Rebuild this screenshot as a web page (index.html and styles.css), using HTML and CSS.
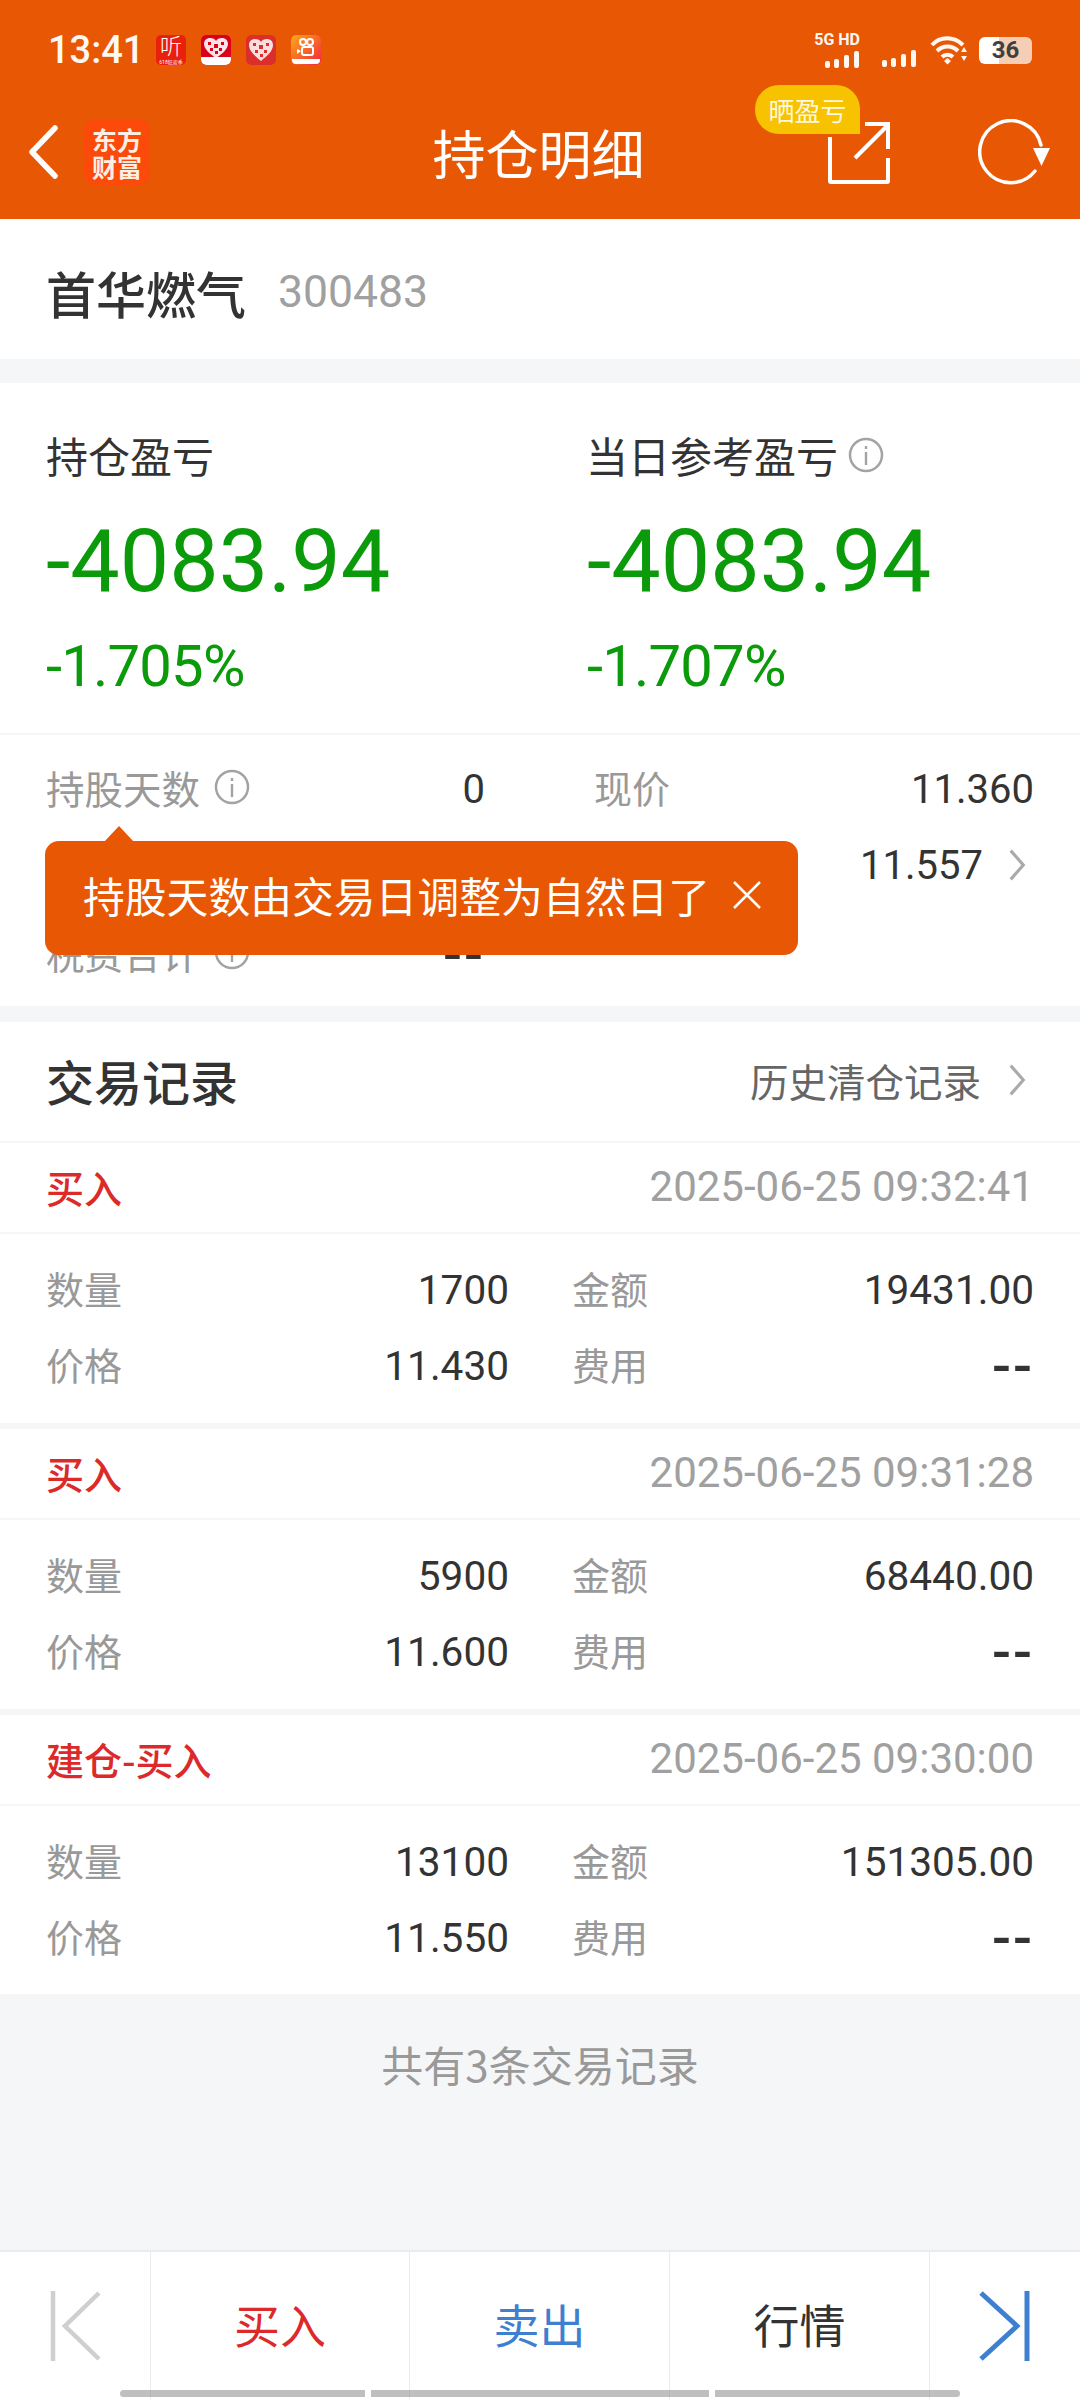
FILE: index.html
```html
<!DOCTYPE html>
<html lang="zh">
<head>
<meta charset="utf-8">
<title>持仓明细</title>
<link rel="stylesheet" href="styles.css">
</head>
<body>
<div class="page">
  <header class="header">
    <div class="status">
      <div class="status-left">
        <span class="time">13:41</span>
        <span class="app app-ting"><span class="ting">听</span><span class="ting-sub">618狂欢季</span></span>
        <span class="app app-white">
          <svg viewBox="0 0 30 30" class="fill"><rect width="30" height="30" rx="5" fill="#d9001b"/><path d="M0 22h30v3a5 5 0 0 1-5 5H5a5 5 0 0 1-5-5z" fill="#fff"/><path d="M15 23C9 19 3 14 3 9c0-4 3-6 6-6 3 0 5 1 6 3 1-2 3-3 6-3 3 0 6 2 6 6 0 5-6 10-12 14z" fill="#fbe4e6"/><path d="M7 7h3v3H7zM13 9h4v4h-4zM20 7h3v3h-3zM9 13h3v3H9zM18 13h3v3h-3zM14 16h3v3h-3z" fill="#d9001b"/></svg>
        </span>
        <span class="app">
          <svg viewBox="0 0 30 30" class="fill"><rect width="30" height="30" rx="5" fill="#dc2f2c"/><path d="M15 26C9 21 3 16 3 10c0-4 3-6 6-6 3 0 5 1 6 3 1-2 3-3 6-3 3 0 6 2 6 6 0 6-6 11-12 16z" fill="#fbdfe0"/><path d="M7 8h3v3H7zM13 10h4v4h-4zM20 8h3v3h-3zM9 15h3v3H9zM18 15h3v3h-3zM14 19h3v3h-3z" fill="#dc2f2c"/></svg>
        </span>
        <span class="app">
          <svg viewBox="0 0 30 30" class="fill"><defs><linearGradient id="ks" x1="0" y1="0" x2="1" y2="1"><stop offset="0" stop-color="#fba919"/><stop offset="1" stop-color="#f5243d"/></linearGradient></defs><rect width="30" height="30" rx="5" fill="url(#ks)"/><circle cx="12" cy="7" r="3" fill="none" stroke="#fff" stroke-width="2"/><circle cx="19" cy="7" r="3" fill="none" stroke="#fff" stroke-width="2"/><rect x="11" y="12" width="11" height="8" rx="2" fill="none" stroke="#fff" stroke-width="2"/><path d="M6 14l4 2-4 3z" fill="#fff"/><path d="M1 24h28v1a4 4 0 0 1-4 4H5a4 4 0 0 1-4-4z" fill="#fff"/></svg>
        </span>
      </div>
      <div class="status-right">
        <div class="signal-group">
          <span class="net">5G HD</span>
          <svg class="bars" viewBox="0 0 35 17"><rect x="0" y="10" width="5" height="7" rx="2"/><rect x="9" y="8" width="5" height="9" rx="2"/><rect x="19" y="4" width="5" height="13" rx="2"/><rect x="29" y="0" width="5" height="17" rx="2"/></svg>
        </div>
        <svg class="bars bars-2" viewBox="0 0 35 17"><rect x="0" y="10" width="5" height="7" rx="2"/><rect x="9" y="8" width="5" height="9" rx="2"/><rect x="19" y="4" width="5" height="13" rx="2"/><rect x="29" y="0" width="5" height="17" rx="2"/></svg>
        <svg class="wifi" viewBox="0 0 38 30"><g fill="none" stroke="#fff8f2" stroke-width="4"><path d="M2 10C10 1 24 1 33 10"/><path d="M7 16c6-6 15-6 21 0"/><path d="M12 22c3-3 8-3 11 0"/></g><path d="M14 26l3.500-3 3.500 3-3.500 3.500z" fill="#fff8f2"/><path d="M34 12l3 5h-6zM31 21h6l-3 5z" fill="#fff8f2"/></svg>
        <span class="battery"><span class="battery-num">36</span></span>
      </div>
    </div>
    <nav class="nav">
      <div class="nav-left">
        <svg class="back" viewBox="0 0 32 54"><path d="M28 3L5 27l23 24" fill="none" stroke="#fff" stroke-width="5.500" stroke-linecap="round" stroke-linejoin="round"/></svg>
        <span class="logo">东方<br>财富</span>
      </div>
      <h1 class="title">持仓明细</h1>
      <div class="nav-right">
        <span class="share-wrap">
          <svg class="share" viewBox="0 0 64 64"><g fill="none" stroke="#fff" stroke-width="4"><path d="M3 16v44a1 1 0 0 0 1 1h56a1 1 0 0 0 1-1V37"/><path d="M28 37L61 4"/><path d="M38 3h23v25"/></g></svg>
          <span class="badge">晒盈亏</span>
        </span>
        <svg class="refresh" viewBox="0 0 72 66"><path d="M57 52A31 31 0 1 1 63 26" fill="none" stroke="#fff" stroke-width="3.500" stroke-linecap="round"/><path d="M55 29h17l-8.500 18z" fill="#fff"/></svg>
      </div>
    </nav>
  </header>

  <section class="name-row">
    <span class="stock-name">首华燃气</span>
    <span class="stock-code">300483</span>
  </section>

  <section class="summary">
    <div class="pl-row">
      <div class="pl-col">
        <div class="pl-label">持仓盈亏</div>
        <div class="pl-value">-4083.94</div>
        <div class="pl-pct">-1.705%</div>
      </div>
      <div class="pl-col">
        <div class="pl-label">当日参考盈亏<svg class="info info-lg" viewBox="0 0 36 36"><circle cx="18" cy="18" r="16" fill="none" stroke="#a3a3a3" stroke-width="2.500"/><rect x="16.800" y="15" width="2.400" height="13" fill="#a3a3a3"/><rect x="16.800" y="9" width="2.400" height="3" fill="#a3a3a3"/></svg></div>
        <div class="pl-value">-4083.94</div>
        <div class="pl-pct">-1.707%</div>
      </div>
    </div>
    <div class="detail">
      <div class="detail-row">
        <div class="detail-cell detail-left"><span class="muted muted-wide">持股天数<svg class="info" viewBox="0 0 36 36"><circle cx="18" cy="18" r="16" fill="none" stroke="#a3a3a3" stroke-width="2.500"/><rect x="16.800" y="15" width="2.400" height="13" fill="#a3a3a3"/><rect x="16.800" y="9" width="2.400" height="3" fill="#a3a3a3"/></svg></span><span class="val">0</span></div>
        <div class="detail-cell detail-right"><span class="muted">现价</span><span class="val">11.360</span></div>
      </div>
      <div class="detail-row">
        <div class="detail-cell detail-left"></div>
        <div class="detail-cell detail-right detail-end"><span class="val">11.557</span><svg class="chev" viewBox="0 0 20 40"><path d="M3 4l14 16L3 36" fill="none" stroke="#aaa" stroke-width="3.500"/></svg></div>
      </div>
      <div class="detail-row detail-last">
        <div class="detail-cell detail-left"><span class="muted muted-wide">税费合计<svg class="info" viewBox="0 0 36 36"><circle cx="18" cy="18" r="16" fill="none" stroke="#a3a3a3" stroke-width="2.500"/><rect x="16.800" y="15" width="2.400" height="13" fill="#a3a3a3"/><rect x="16.800" y="9" width="2.400" height="3" fill="#a3a3a3"/></svg></span><span class="val dash">--</span></div>
      </div>
    </div>
    <div class="tip">
      <span class="tip-text">持股天数由交易日调整为自然日了</span>
      <svg class="tip-close" viewBox="0 0 30 30"><path d="M2 2l26 26M28 2L2 28" stroke="#fff" stroke-width="2.500" fill="none"/></svg>
    </div>
  </section>

  <section class="records">
    <div class="records-head">
      <span class="records-title">交易记录</span>
      <span class="records-link">历史清仓记录<svg class="chev" viewBox="0 0 20 40"><path d="M3 4l14 16L3 36" fill="none" stroke="#aaa" stroke-width="3.500"/></svg></span>
    </div>

    <article class="trade">
      <div class="trade-head"><span class="trade-type">买入</span><span class="trade-time">2025-06-25 09:32:41</span></div>
      <div class="trade-grid">
        <span class="muted">数量</span><span class="val">1700</span><span class="muted col3">金额</span><span class="val">19431.00</span>
        <span class="muted">价格</span><span class="val">11.430</span><span class="muted col3">费用</span><span class="val dash">--</span>
      </div>
    </article>
    <article class="trade">
      <div class="trade-head"><span class="trade-type">买入</span><span class="trade-time">2025-06-25 09:31:28</span></div>
      <div class="trade-grid">
        <span class="muted">数量</span><span class="val">5900</span><span class="muted col3">金额</span><span class="val">68440.00</span>
        <span class="muted">价格</span><span class="val">11.600</span><span class="muted col3">费用</span><span class="val dash">--</span>
      </div>
    </article>
    <article class="trade trade-last">
      <div class="trade-head"><span class="trade-type">建仓-买入</span><span class="trade-time">2025-06-25 09:30:00</span></div>
      <div class="trade-grid">
        <span class="muted">数量</span><span class="val">13100</span><span class="muted col3">金额</span><span class="val">151305.00</span>
        <span class="muted">价格</span><span class="val">11.550</span><span class="muted col3">费用</span><span class="val dash">--</span>
      </div>
    </article>
  </section>

  <div class="count"><span>共有3条交易记录</span></div>

  <footer class="bar">
    <div class="bar-arrow bar-first"><svg viewBox="0 0 52 72"><path d="M3 1v70" stroke="#cfcfcf" stroke-width="4.500" fill="none"/><path d="M49 3L15 36l34 33" stroke="#cfcfcf" stroke-width="4.500" fill="none"/></svg></div>
    <div class="bar-btn bar-buy">买入</div>
    <div class="bar-btn bar-sell">卖出</div>
    <div class="bar-btn bar-quote">行情</div>
    <div class="bar-arrow bar-next"><svg viewBox="0 0 52 72"><path d="M49 1v70" stroke="#3f7fd0" stroke-width="5" fill="none"/><path d="M3 3l36 33L3 69" stroke="#3f7fd0" stroke-width="5" fill="none"/></svg></div>
    <div class="scroll"><span class="s1"></span><span class="s2"></span><span class="s3"></span></div>
  </footer>
</div>
</body>
</html>
```

FILE: styles.css
```css
* { box-sizing: border-box; }
html, body { margin: 0; padding: 0; }
body {
  width: 1080px;
  height: 2400px;
  overflow: hidden;
  background: #f5f6f8;
  font-family: Roboto, "Noto Sans CJK SC", sans-serif;
  color: #333;
}
.page { width: 1080px; height: 2400px; display: flex; flex-direction: column; }

/* header */
.header { height: 219px; background: #e85704; color: #fff; }
.status { height: 92px; padding: 8px 48px 0 48px; display: flex; justify-content: space-between; align-items: center; }
.status-left { display: flex; align-items: center; }
.time { font-size: 38px; font-weight: 500; width: 108px; color: #fff8f2; }
.app { width: 30px; height: 30px; margin-right: 15px; border-radius: 5px; overflow: hidden; display: block; }
.fill { width: 30px; height: 30px; display: block; }
.app-ting { background: #e9210c; display: flex; flex-direction: column; align-items: center; }
.ting { font-size: 22px; line-height: 24px; color: #fff; font-weight: 300; }
.ting-sub { font-size: 5px; line-height: 6px; color: #fff; white-space: nowrap; }
.status-right { display: flex; align-items: center; position: relative; }
.signal-group { width: 47px; display: flex; flex-direction: column; align-items: flex-end; }
.net { font-size: 16px; line-height: 14px; font-weight: 700; white-space: nowrap; color: #fff8f2; margin-bottom: 4px; }
.bars { width: 35px; height: 17px; fill: #fff8f2; display: block; }
.bars-2 { margin: 17px 13px 0 22px; }
.wifi { width: 38px; height: 30px; margin-right: 11px; }
.battery {
  width: 53px; height: 27px; border-radius: 6px;
  background: linear-gradient(90deg, #fff 0, #fff 38%, #f6cdb5 38%, #f6cdb5 100%);
  display: flex; align-items: center; justify-content: center;
}
.battery-num { font-size: 24px; line-height: 27px; font-weight: 700; color: #3f3f3f; }

.nav { height: 120px; display: grid; grid-template-columns: 1fr auto 1fr; align-items: center; padding: 0 30px 0 27px; }
.nav-left { display: flex; align-items: center; }
.back { width: 32px; height: 54px; margin-right: 25px; }
.logo {
  width: 66px; height: 66px; border-radius: 12px; background: #fb4a09;
  color: #fdeee4; font-size: 25px; line-height: 27px; font-weight: 700;
  font-family: "Noto Sans CJK SC", sans-serif; text-align: center;
  display: flex; align-items: center; justify-content: center; padding-top: 2px;
}
.title { margin: 0; font-size: 53px; font-weight: 400; line-height: 64px; color: #fff; font-family: "Noto Sans CJK SC", sans-serif; }
.nav-right { display: flex; justify-content: flex-end; align-items: center; }
.share-wrap { position: relative; width: 64px; height: 64px; margin-right: 87px; margin-top: 1px; }
.share { width: 64px; height: 64px; display: block; }
.badge {
  position: absolute; left: -72px; top: -36px; width: 105px; height: 49px;
  background: #f7c200; border-radius: 24px 24px 0 24px;
  font-size: 26px; line-height: 49px; text-align: center; color: #fff7df;
  font-family: "Noto Sans CJK SC", sans-serif;
}
.refresh { width: 72px; height: 66px; display: block; }

/* name */
.name-row { height: 140px; background: #fff; padding: 6px 46px 0; display: flex; align-items: center; }
.stock-name { font-size: 50px; font-weight: 500; color: #333; font-family: "Noto Sans CJK SC", sans-serif; margin-right: 32px; }
.stock-code { font-size: 44.500px; color: #a0a0a0; }

/* summary */
.summary { position: relative; margin-top: 24px; height: 623px; background: #fff; }
.pl-row { height: 352px; display: grid; grid-template-columns: 541px 1fr; padding: 0 0 0 46px; border-bottom: 2px solid #f6f6f6; }
.pl-col { padding-top: 47px; }
.pl-col + .pl-col .pl-label { margin-left: -1px; }
.pl-label { height: 50px; font-size: 42px; line-height: 50px; color: #333; display: flex; align-items: center; font-family: "Noto Sans CJK SC", sans-serif; }
.pl-value { margin-top: 31px; font-size: 88px; line-height: 100px; color: #0a9a0a; white-space: nowrap; }
.pl-pct { margin-top: 20px; font-size: 58px; line-height: 70px; color: #0a9a0a; white-space: nowrap; letter-spacing: -0.8px; }

.detail { padding-top: 16px; }
.detail-row { height: 76px; display: flex; padding: 0 46px; }
.detail-last { margin-top: 13px; }
.detail-cell { display: flex; justify-content: space-between; align-items: center; }
.detail-left { width: 439px; }
.detail-right { width: 440px; margin-left: 109px; }
.detail-end { justify-content: flex-end; }
.muted { font-size: 38px; line-height: 46px; padding-bottom: 5px; color: #999; display: flex; align-items: center; font-family: "Noto Sans CJK SC", sans-serif; }
.muted-wide { font-size: 38.500px; }
.val { font-size: 40px; color: #333; white-space: nowrap; }
.dash { font-size: 56px; line-height: 46px; font-weight: 500; letter-spacing: 2px; }
.info { width: 36px; height: 36px; margin-left: 14px; flex: none; }
.info-lg { margin-left: 10px; }
.chev { width: 20px; height: 36px; margin-left: 24px; margin-right: 7px; flex: none; }

.tip {
  position: absolute; left: 45px; top: 458px; width: 753px; height: 114px;
  background: #e85704; border-radius: 14px; display: flex; align-items: center;
  justify-content: space-between; padding: 0 36px 6px 38px;
}
.tip::before {
  content: ""; position: absolute; left: 59px; top: -15px;
  border-left: 15px solid transparent; border-right: 15px solid transparent; border-bottom: 16px solid #e85704;
}
.tip-text { font-size: 41.800px; line-height: 60px; color: #fff; white-space: nowrap; font-family: "Noto Sans CJK SC", sans-serif; }
.tip-close { width: 30px; height: 30px; flex: none; }

/* records */
.records { margin-top: 16px; background: #fff; }
.records-head { height: 121px; padding: 0 46px 4px; display: flex; align-items: center; justify-content: space-between; border-bottom: 2px solid #f6f6f6; }
.records-title { font-size: 48px; font-weight: 500; color: #333; font-family: "Noto Sans CJK SC", sans-serif; }
.records-link { font-size: 38.500px; color: #666; display: flex; align-items: center; font-family: "Noto Sans CJK SC", sans-serif; }
.records-link .chev { margin-right: 7px; margin-left: 26px; }
.trade { height: 286px; border-bottom: 6px solid #f5f6f8; }
.trade-last { height: 279px; border-bottom: 0; }
.trade-head { height: 91px; padding: 0 46px 2px; display: flex; align-items: center; justify-content: space-between; border-bottom: 2px solid #f6f6f6; }
.trade-type { font-size: 38px; color: #dc2a2a; font-family: "Noto Sans CJK SC", sans-serif; font-weight: 500; }
.trade-time { font-size: 42px; color: #a0a0a0; white-space: nowrap; }
.trade-grid { display: grid; grid-template-columns: 100px 363px 163px 362px; grid-auto-rows: 76px; padding: 18px 46px 0; align-items: center; }
.trade-grid > .val { text-align: right; font-size: 40.600px; }
.trade-grid > .dash { font-size: 56px; }
.col3 { margin-left: 63px; }

/* count */
.count { flex: 1; display: flex; justify-content: center; padding-top: 46px; }
.count span { font-size: 42px; line-height: 48px; color: #999; font-family: "Noto Sans CJK SC", sans-serif; }

/* bottom */
.bar { position: relative; height: 150px; background: #fff; border-top: 2px solid #e9ebee; display: grid; grid-template-columns: 151px 259px 260px 260px 1fr; }
.bar-btn, .bar-arrow { display: flex; align-items: center; justify-content: center; border-right: 1px solid #ececec; }
.bar-btn { font-size: 46px; padding-bottom: 6px; font-family: "Noto Sans CJK SC", sans-serif; }
.bar-arrow svg { width: 52px; height: 72px; display: block; }
.bar-first { justify-content: flex-start; padding-left: 50px; }
.bar-next { border-right: 0; justify-content: flex-start; padding-left: 48px; }
.bar-buy { color: #dc2a2a; }
.bar-sell { color: #3f7fd0; }
.bar-quote { color: #333; }
.scroll { position: absolute; left: 120px; top: 138px; width: 840px; height: 7px; display: flex; gap: 6px; }
.scroll span { display: block; height: 7px; background: rgba(120, 120, 120, .47); }
.s1 { width: 245px; border-radius: 4px 0 0 4px; }
.s2 { width: 338px; }
.s3 { width: 245px; border-radius: 0 4px 4px 0; }
```
